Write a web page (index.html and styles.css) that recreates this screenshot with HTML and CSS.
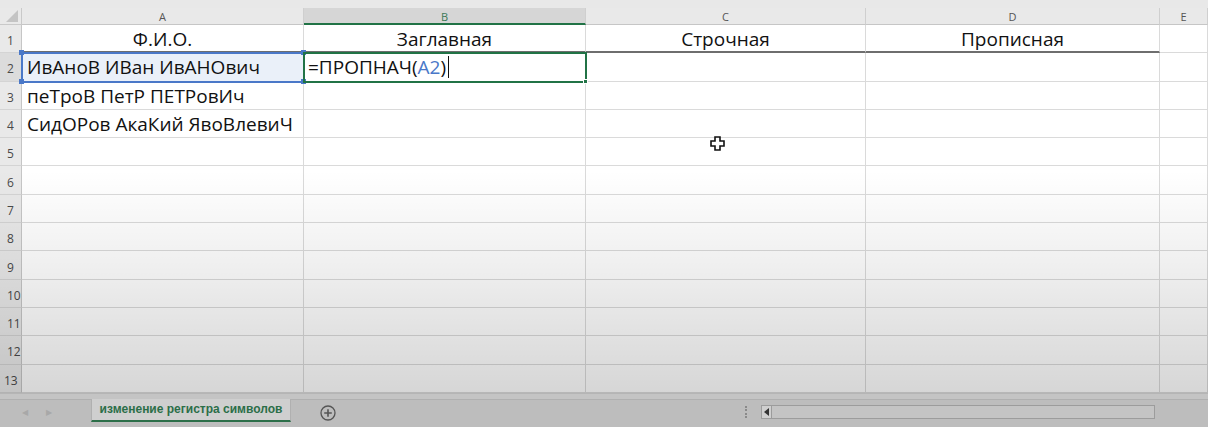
FILE: index.html
```html
<!DOCTYPE html>
<html lang="ru">
<head>
<meta charset="utf-8">
<title>Excel</title>
<link rel="stylesheet" href="styles.css">
</head>
<body>
<div class="app">
  <div class="topstrip"></div>
  <div class="sheet">
    <div class="corner"><svg width="12" height="12" viewBox="0 0 12 12"><path d="M12 0 L12 12 L0 12 Z" fill="#c4c4c4"/></svg></div>
    <div class="colh">A</div>
    <div class="colh active">B</div>
    <div class="colh">C</div>
    <div class="colh">D</div>
    <div class="colh">E</div>

    <div class="rowh">1</div>
    <div class="cell c head">Ф.И.О.</div>
    <div class="cell c head">Заглавная</div>
    <div class="cell c head">Строчная</div>
    <div class="cell c head">Прописная</div>
    <div class="cell"></div>

    <div class="rowh active">2</div>
    <div class="cell ref">ИвАноВ ИВан ИвАНОвич<span class="h tl"></span><span class="h tr"></span><span class="h bl"></span><span class="h br"></span></div>
    <div class="cell edit">=ПРОПНАЧ(<span class="refc">A2</span>)<span class="caret"></span><span class="fill"></span></div>
    <div class="cell"></div>
    <div class="cell"></div>
    <div class="cell"></div>

    <div class="rowh">3</div>
    <div class="cell">пеТроВ ПетР ПЕТРовИч</div>
    <div class="cell"></div><div class="cell"></div><div class="cell"></div><div class="cell"></div>

    <div class="rowh">4</div>
    <div class="cell">СидОРов АкаКий ЯвоВлевиЧ</div>
    <div class="cell"></div><div class="cell"></div><div class="cell"></div><div class="cell"></div>

    <div class="rowh">5</div><div class="cell"></div><div class="cell"></div><div class="cell"></div><div class="cell"></div><div class="cell"></div>
    <div class="rowh">6</div><div class="cell"></div><div class="cell"></div><div class="cell"></div><div class="cell"></div><div class="cell"></div>
    <div class="rowh">7</div><div class="cell"></div><div class="cell"></div><div class="cell"></div><div class="cell"></div><div class="cell"></div>
    <div class="rowh">8</div><div class="cell"></div><div class="cell"></div><div class="cell"></div><div class="cell"></div><div class="cell"></div>
    <div class="rowh">9</div><div class="cell"></div><div class="cell"></div><div class="cell"></div><div class="cell"></div><div class="cell"></div>
    <div class="rowh">10</div><div class="cell"></div><div class="cell"></div><div class="cell"></div><div class="cell"></div><div class="cell"></div>
    <div class="rowh">11</div><div class="cell"></div><div class="cell"></div><div class="cell"></div><div class="cell"></div><div class="cell"></div>
    <div class="rowh">12</div><div class="cell"></div><div class="cell"></div><div class="cell"></div><div class="cell"></div><div class="cell"></div>
    <div class="rowh">13</div><div class="cell"></div><div class="cell"></div><div class="cell"></div><div class="cell"></div><div class="cell"></div>
  </div>
  <div class="gap"></div>
  <div class="tabbar">
    <div class="navs"><span>&#9664;</span><span>&#9654;</span></div>
    <div class="tab">изменение регистра символов</div>
    <div class="add"><svg width="16" height="16" viewBox="0 0 16 16"><circle cx="8" cy="8" r="7" fill="none" stroke="#555" stroke-width="1.3"/><path d="M8 4.2 V11.8 M4.2 8 H11.8" stroke="#555" stroke-width="1.6"/></svg></div>
    <div class="spacer"></div>
    <div class="grip"></div>
    <div class="hscroll"><span class="larr"><svg width="6" height="8" viewBox="0 0 6 8"><path d="M5 0 L0 4 L5 8 Z" fill="#333"/></svg></span><span class="track"></span></div>
  </div>
  <div class="shade"></div>
  <svg class="pointer" width="15" height="15" viewBox="0 0 15 15"><path d="M5 1 H10 V5 H14 V10 H10 V14 H5 V10 H1 V5 H5 Z" fill="#fff" stroke="#111" stroke-width="1.6" stroke-linejoin="miter"/></svg>
</div>
</body>
</html>
```

FILE: styles.css
```css
* { box-sizing: border-box; }
html, body { margin: 0; padding: 0; }
body {
  width: 1208px;
  height: 427px;
  overflow: hidden;
  background: #ffffff;
  font-family: "Open Sans", "Noto Sans", "Liberation Sans", sans-serif;
}
.app {
  position: relative;
  width: 1208px;
  height: 427px;
  display: flex;
  flex-direction: column;
}
.topstrip {
  height: 8px;
  background: #e8e8e8;
}
.sheet {
  display: grid;
  grid-template-columns: 22px 282px 282px 280px 294px 48px;
  grid-template-rows: 17px repeat(13, 28.3px);
  background: #fff;
}
.corner {
  background: #e9e9e9;
  border-right: 1px solid #c9c9c9;
  border-bottom: 1px solid #c9c9c9;
  display: flex;
  align-items: flex-end;
  justify-content: flex-end;
  padding: 0 3px 2px 0;
}
.colh {
  background: #e9e9e9;
  border-right: 1px solid #cfcfcf;
  border-bottom: 1px solid #c6c6c6;
  font-size: 11px;
  color: #555;
  display: flex;
  align-items: center;
  justify-content: center;
  padding-top: 1px;
}
.colh.active {
  background: #d6d6d6;
  color: #3d7a58;
  border-bottom: 2px solid #217346;
}
.rowh {
  background: #e9e9e9;
  border-right: 1px solid #c6c6c6;
  border-bottom: 1px solid #d4d4d4;
  font-size: 12px;
  color: #4a4a4a;
  display: flex;
  align-items: center;
  padding-left: 7px;
  padding-top: 4px;
}
.rowh:nth-child(n+78) { padding-left: 4px; }
.rowh.active {
  background: #dcdcdc;
}
.cell {
  position: relative;
  border-right: 1px solid #dadada;
  border-bottom: 1px solid #dadada;
  font-size: 19px;
  color: #111;
  display: flex;
  align-items: center;
  padding: 1px 0 0 5px;
  white-space: nowrap;
}
.cell.c { justify-content: center; padding-left: 0; }
.cell.head { border-bottom: 2px solid #6e6e6e; }
.cell.ref {
  background: #eaf0f9;
  outline: 2px solid #4a78c8;
  outline-offset: -1px;
  z-index: 1;
}
.h {
  position: absolute;
  width: 5px;
  height: 5px;
  background: #4a78c8;
}
.h.tl { left: -3px; top: -3px; }
.h.tr { right: -3px; top: -3px; }
.h.bl { left: -3px; bottom: -3px; }
.h.br { right: -3px; bottom: -3px; }
.cell.edit {
  outline: 2px solid #217346;
  outline-offset: -1px;
  z-index: 2;
  padding-left: 4px;
}
.refc { color: #4a78c8; }
.caret {
  display: inline-block;
  width: 1px;
  height: 22px;
  background: #111;
  margin-left: 2px;
}
.fill {
  position: absolute;
  right: -3px;
  bottom: -3px;
  width: 5px;
  height: 5px;
  background: #217346;
  border: 1px solid #fff;
}
.gap {
  height: 6px;
  background: #c4c4c4;
  border-top: 1px solid #b5b5b5;
}
.tabbar {
  flex: 1;
  display: flex;
  align-items: flex-start;
  background: #bdbdbd;
  border-top: 1px solid #b0b0b0;
}
.navs {
  width: 91px;
  display: flex;
  gap: 18px;
  padding: 6px 0 0 22px;
  font-size: 8px;
  color: #a8a8a8;
}
.tab {
  width: 200px;
  height: 23px;
  background: #cfcfcf;
  border-bottom: 2px solid #2b6e48;
  border-left: 1px solid #b0b0b0;
  border-right: 1px solid #b0b0b0;
  margin-top: -1px;
  color: #2b6e48;
  font-family: "Liberation Sans", Arial, sans-serif;
  font-weight: bold;
  font-size: 12px;
  display: flex;
  align-items: center;
  justify-content: center;
}
.add {
  margin: 4px 0 0 29px;
  height: 16px;
}
.spacer { flex: 1; }
.grip {
  width: 2px;
  height: 12px;
  margin: 6px 14px 0 0;
  border-left: 2px dotted #8a8a8a;
}
.hscroll {
  width: 394px;
  height: 14px;
  margin-top: 5px;
  margin-right: 53px;
  display: flex;
  border: 1px solid #9c9c9c;
  background: #c4c4c4;
}
.larr {
  width: 10px;
  border-right: 1px solid #9c9c9c;
  display: flex;
  align-items: center;
  justify-content: center;
  background: #cfcfcf;
}
.track { flex: 1; }
.shade {
  position: absolute;
  left: 0;
  top: 0;
  width: 1208px;
  height: 393px;
  pointer-events: none;
  background: linear-gradient(to bottom, rgba(0,0,0,0) 0px, rgba(0,0,0,0) 170px, rgba(0,0,0,0.06) 260px, rgba(0,0,0,0.16) 393px);
}
.pointer {
  position: absolute;
  left: 710px;
  top: 136px;
}
```
